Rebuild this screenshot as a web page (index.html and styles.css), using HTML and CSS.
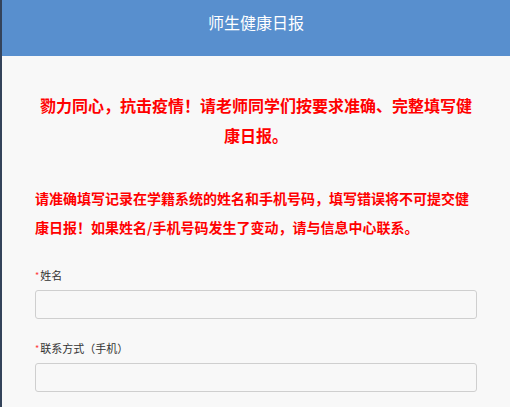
FILE: index.html
```html
<!DOCTYPE html>
<html lang="zh-CN">
<head>
<meta charset="utf-8">
<title>师生健康日报</title>
<link rel="stylesheet" href="styles.css">
</head>
<body>
<div class="page">
  <header class="topbar">
    <h1 class="title">师生健康日报</h1>
  </header>
  <main class="content">
    <p class="notice notice-center">勠力同心，抗击疫情！请老师同学们按要求准确、完整填写健康日报。</p>
    <p class="notice notice-left">请准确填写记录在学籍系统的姓名和手机号码，填写错误将不可提交健康日报！如果姓名/手机号码发生了变动，请与信息中心联系。</p>
    <form class="form">
      <div class="field">
        <label class="label" for="name"><span class="req">*</span>姓名</label>
        <input class="input" id="name" type="text">
      </div>
      <div class="field">
        <label class="label" for="phone"><span class="req">*</span>联系方式（手机）</label>
        <input class="input" id="phone" type="text">
      </div>
    </form>
  </main>
</div>
</body>
</html>
```

FILE: styles.css
```css
html, body {
  margin: 0;
  padding: 0;
  height: 100%;
  background: #f8f8f8;
}
body {
  font-family: "Noto Sans CJK SC", "Liberation Sans", sans-serif;
}
.page {
  min-height: 100%;
  border-left: 2px solid #34435a;
  background: #f8f8f8;
  box-sizing: border-box;
}
.topbar {
  height: 56px;
  background: #588fce;
  box-sizing: border-box;
  padding-top: 12px;
}
.title {
  margin: 0;
  font-size: 16px;
  line-height: 20px;
  font-weight: normal;
  color: #ffffff;
  text-align: center;
}
.content {
  padding: 34px 33px 0 33px;
}
.notice {
  margin: 0;
  color: #ff0000;
  font-weight: bold;
}
.notice-center {
  font-size: 16px;
  line-height: 30px;
  text-align: center;
}
.notice-left {
  margin-top: 34px;
  font-size: 14px;
  line-height: 29px;
  text-align: left;
}
.form {
  margin-top: 23px;
  display: flex;
  flex-direction: column;
  gap: 19px;
}
.field {
  display: flex;
  flex-direction: column;
  gap: 4px;
}
.label {
  font-size: 11px;
  line-height: 20px;
  color: #333333;
}
.req {
  color: #ff3b3b;
  font-size: 9px;
  vertical-align: 1px;
  margin-right: 1px;
}
.input {
  height: 29px;
  box-sizing: border-box;
  border: 1px solid #cfcfcf;
  border-radius: 3px;
  background: #f8f8f8;
  margin: 0;
  padding: 0 8px;
  width: 100%;
}
```
